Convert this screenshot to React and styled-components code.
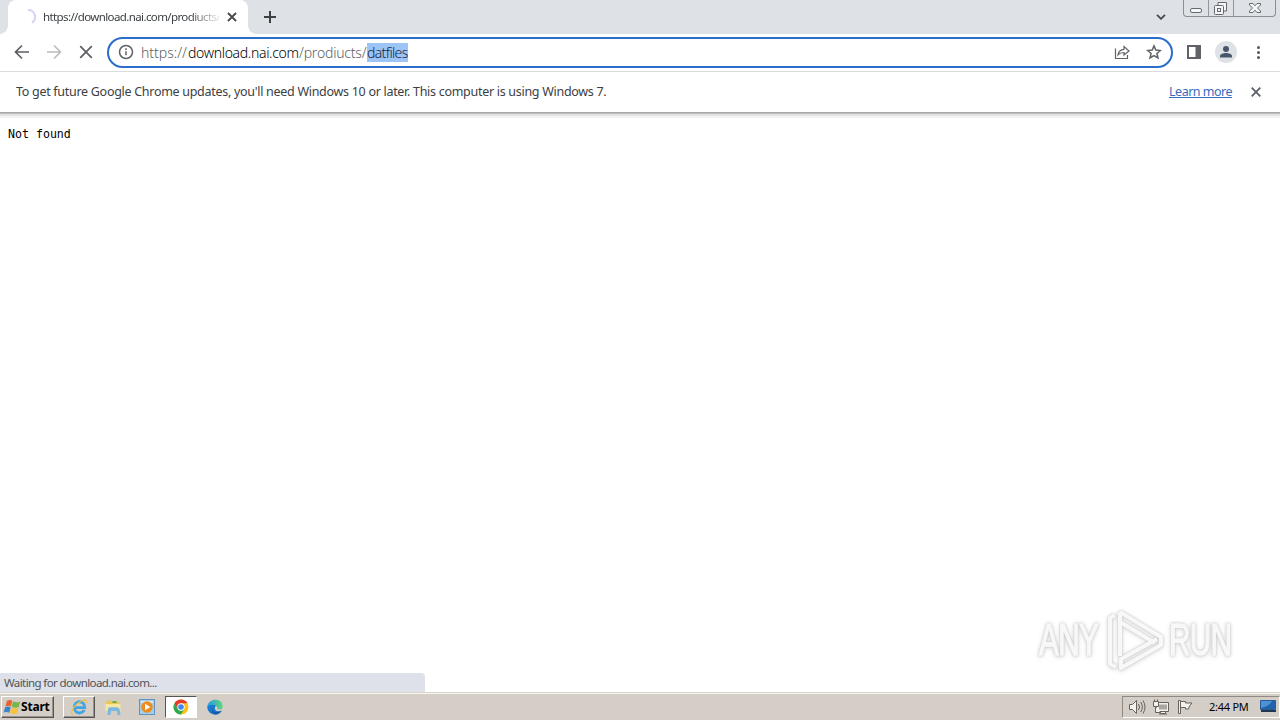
import React from 'react';
import styled, { createGlobalStyle } from 'styled-components';

const App = () => {
    return (
        <Screen>
            <GlobalStyle />
            <TabStrip>
                <Tab>
                    <Spinner viewBox="0 0 16 16"><path d="M8 1a7 7 0 0 1 4 12.8" /></Spinner>
                    <TabTitle>https://download.nai.com/prodiucts/</TabTitle>
                    <TabClose viewBox="0 0 10 10"><path d="M1 1l8 8M9 1l-8 8" /></TabClose>
                </Tab>
                <NewTab viewBox="0 0 12 12"><path d="M6 0v12M0 6h12" /></NewTab>
                <TabSearch viewBox="0 0 10 6"><path d="M1 .8l4 4 4-4" /></TabSearch>
                <Caption>
                    <CaptionButton $width={25}>
                        <svg width="25" height="16"><rect x="6.5" y="8.5" width="11" height="4" rx="1.5" /></svg>
                    </CaptionButton>
                    <CaptionButton $width={25}>
                        <svg width="25" height="16"><path d="M9 5V2.500h8.500v8.500H15" /><rect x="5.500" y="5.500" width="9" height="9" rx="1" /><rect x="8.500" y="8.500" width="3" height="3" /></svg>
                    </CaptionButton>
                    <CaptionButton $width={42}>
                        <svg width="42" height="16"><path d="M15.500 3.500h3.500l2 2.300 2-2.300h3.500v1.500l-3 3 3 3v1.500h-3.500l-2-2.300-2 2.300h-3.500v-1.500l3-3-3-3z" /></svg>
                    </CaptionButton>
                </Caption>
            </TabStrip>

            <Toolbar>
                <NavIcon viewBox="0 0 16 16"><path d="M15 8H2M8 1.500L1.500 8 8 14.500" /></NavIcon>
                <NavIcon viewBox="0 0 16 16" $disabled><path d="M1 8h13M8 1.500L14.500 8 8 14.500" /></NavIcon>
                <NavIcon viewBox="0 0 16 16"><path d="M2.200 2.200l11.600 11.600M13.800 2.200L2.200 13.800" /></NavIcon>
                <Omnibox>
                    <InfoIcon viewBox="0 0 16 16">
                        <circle cx="8" cy="8" r="6.500" /><path d="M8 7.200v4M8 4.300v1.600" />
                    </InfoIcon>
                    <Url>
                        <UrlPart $width={47}>https://</UrlPart>
                        <UrlPart $strong $width={111} $spacing="-0.32px">download.nai.com</UrlPart>
                        <UrlPart $width={68} $spacing="-0.2px">/prodiucts/</UrlPart>
                        <Selection $width={41} $spacing="-0.65px">datfiles</Selection>
                    </Url>
                    <LineIcon viewBox="0 0 16 16" $stroke={1.2}>
                        <path d="M1.500 4.500v10h12V11M4 10.800c.5-3.500 2.500-5.200 6-5.500V2.500L15 7l-5 4V8.500c-2.800 0-4.500.6-6 2.300z" />
                    </LineIcon>
                    <LineIcon viewBox="0 0 16 16" $stroke={1.5}>
                        <path d="M8 1.900l1.800 4.200 4.600.4-3.500 3 1.100 4.500L8 11.600 4 14l1.100-4.500-3.500-3 4.600-.4z" />
                    </LineIcon>
                </Omnibox>
                <PanelIcon viewBox="0 0 14 14"><rect x="1" y="1" width="12" height="12" /><path d="M8.500 0H14v14H8.500z" /></PanelIcon>
                <Avatar>
                    <svg width="14" height="14" viewBox="0 0 14 14"><circle cx="7" cy="4" r="3" /><path d="M1 12.500v-1.500c0-2 3.500-3 6-3s6 1 6 3v1.500z" /></svg>
                </Avatar>
                <Menu><i /><i /><i /></Menu>
            </Toolbar>

            <InfoBar>
                <Message>To get future Google Chrome updates, you'll need Windows 10 or later. This computer is using Windows 7.</Message>
                <LearnMore>Learn more</LearnMore>
                <InfoClose viewBox="0 0 10 10"><path d="M.7.7l8.600 8.600M9.300.7L.7 9.300" /></InfoClose>
            </InfoBar>

            <Page>
                <Pre>Not found</Pre>
                <Status>Waiting for download.nai.com...</Status>
                <Watermark>
                    <span>ANY</span>
                    <svg width="58" height="64" viewBox="0 0 58 64">
                        <path d="M8 7L3 10v46l6 3M13 4v44M13 4l41 25v8L14 60v-9l36-20M13 4v10l35 21" />
                    </svg>
                    <span>RUN</span>
                </Watermark>
            </Page>

            <TaskBar>
                <StartButton>
                    <svg width="18" height="16" viewBox="0 0 18 16">
                        <path fill="#e8642d" d="M4 1.800Q6.800.2 9.300 1.800L7.900 7.300Q5.300 6 2.400 7.300z" />
                        <path fill="#78b64a" d="M10 2.200Q13.500 4.200 17.300 2.400L15.700 8q-3.500 1.500-7.100-.3z" />
                        <path fill="#3d83cb" d="M2.200 8.100Q5.200 6.800 7.700 8.200L6.200 13.800Q3.500 12.200.6 13.600z" />
                        <path fill="#f4c23b" d="M8.400 8.500q3.500 1.700 7.100.3L13.900 14.300q-3.500 1.500-7-.2z" />
                    </svg>
                    Start
                </StartButton>
                <TaskButton $raised>
                    <svg width="18" height="18" viewBox="0 0 18 18" fill="none">
                        <path stroke="#3fa5e3" strokeWidth="2.800" d="M14.200 12A5.300 5.600 0 1 1 14.800 9.700H5" />
                        <path stroke="#edc04a" strokeWidth="1.300" d="M3.500 16C-.2 17.200 1.500 10.800 7 6s10.800-5.300 9.300-1.200" />
                    </svg>
                </TaskButton>
                <TaskButton>
                    <svg width="18" height="18" viewBox="0 0 18 18">
                        <path fill="#e9c75d" d="M2 3.500L6 2l1.500 1.500H15V13H2z" />
                        <path fill="#68b34e" d="M8.500 3h4v2h-4z" />
                        <path fill="#f8e7a0" d="M1.500 6h15v7h-15z" />
                        <path fill="#79b9df" d="M4 11q0-1.800 1.800-1.800h7.400q1.800 0 2.300 1.800l1 6h-3l-.5-4H7l-.5 4h-3z" />
                    </svg>
                </TaskButton>
                <TaskButton>
                    <svg width="18" height="18" viewBox="0 0 18 18">
                        <rect x="1.500" y="1.500" width="15" height="15" fill="#a5cce8" stroke="#5f94c1" />
                        <path fill="#d4e7f5" d="M3 3h12v2H3z" />
                        <circle cx="9" cy="9" r="5.700" fill="#ef8a1d" />
                        <path fill="#fff" d="M7 5.700L12.300 9 7 12.300z" />
                    </svg>
                </TaskButton>
                <TaskButton $active>
                    <svg width="16" height="16" viewBox="0 0 16 16">
                        <circle cx="8" cy="8" r="7.500" fill="#fbc116" />
                        <path fill="#e33b2e" d="M1.500 4.250A7.500 7.500 0 0 1 14.500 4.250H8L4.750 9.900z" />
                        <path fill="#2da94f" d="M1.500 4.250L4.750 9.900 8 11.750 11.250 9.900 7.900 15.500A7.500 7.500 0 0 1 1.500 4.250z" />
                        <circle cx="8" cy="8" r="3.700" fill="#fff" />
                        <circle cx="8" cy="8" r="2.800" fill="#4285f4" />
                    </svg>
                </TaskButton>
                <TaskButton>
                    <svg width="16" height="16" viewBox="0 0 16 16">
                        <defs>
                            <linearGradient id="edge" x1="0" x2="1"><stop stopColor="#229be5" /><stop offset="1" stopColor="#61d779" /></linearGradient>
                        </defs>
                        <path fill="#1a78cf" d="M.3 8C1 4 9 3 9.500 7c-2.500 0-2.500 5 2 5.300q2 .2 3.300-.8C12.500 16 8.500 16.200 6 15.300 2.500 14.200.3 11.500.3 8z" />
                        <path fill="url(#edge)" d="M.3 8C.5-.5 15.500-2.500 15.700 7.500c0 3-3.500 3.800-5.500 2.700C11.500 6.500 5 3.500.3 8z" />
                        <path fill="#145aa7" d="M5.800 8c-1.800 4 2.700 7 9 3.600-3 5.800-13 4.400-9-3.600z" />
                        <path fill="#d5cec7" d="M8.600 7.800q1-.9 1.500.2.400.9-.2 2.100 2.300 1.300 5.200-.1-.7 1.300-1.500 1.600-3.500.7-4.800-1Q8 9.300 8.600 7.800z" />
                    </svg>
                </TaskButton>
                <Tray>
                    <svg width="18" height="16" viewBox="0 0 18 16">
                        <path d="M1.500 5.500h3l4-4v13l-4-4h-3z" /><path d="M10.500 5q2 3 0 6M12.700 3q3.300 5 0 10M15 1.500q4 6.500 0 13" />
                    </svg>
                    <svg width="18" height="16" viewBox="0 0 18 16">
                        <path d="M4.500 3.500h12v9h-12zM8.500 12.500h5v2h-5z" />
                        <path d="M7 15h8" />
                        <path fill="#aaa69f" stroke="none" d="M7 5.500h8v5H7z" />
                        <path d="M1.500 2.500h5v5h-5zM2.500.5v2M5.500.5v2M3.500 7.500v6h5" />
                    </svg>
                    <svg width="18" height="16" viewBox="0 0 18 16">
                        <path d="M2.500 1.500h2v13h-2zM4.500 2.500h5v1.500h6.500l-2.500 3-1 3h-3V8.500h-5z" />
                    </svg>
                    <Clock>2:44 PM</Clock>
                    <Desktop viewBox="0 0 16 13"><path fill="#2363ad" stroke="#2b5c95" d="M.5.5h15v9H.5z" /><path fill="#4c91d4" stroke="none" d="M1 1h11Q10 6 1 8z" /><path fill="#233650" stroke="none" d="M1 10h15v2H1z" /></Desktop>
                </Tray>
            </TaskBar>
        </Screen>
    );
}

const GlobalStyle = createGlobalStyle`
  body {
   margin: 0;
   background: #fff;
  }

  * {
   box-sizing: border-box;
  }

  svg {
   display: block;
   flex-shrink: 0;
  }`;

const Screen = styled.div`
  display: flex;
  flex-direction: column;
  width: 1280px;
  height: 720px;
  overflow: hidden;
  font-family: "Noto Sans", "Open Sans", sans-serif;
  white-space: nowrap;`;

const TabStrip = styled.div`
  display: flex;
  align-items: flex-start;
  height: 34px;
  padding-left: 8px;
  background: #dee1e6;`;

const Tab = styled.div`
  position: relative;
  display: flex;
  align-items: center;
  width: 240px;
  height: 34px;
  padding: 0 11px 0 12px;
  background: #fff;
  border-radius: 8px 8px 0 0;

  &::before, &::after {
   content: "";
   position: absolute;
   bottom: 0;
   width: 8px;
   height: 8px;
  }

  &::before {
   left: -8px;
   background: radial-gradient(circle at 0 0, transparent 7.5px, #fff 8px);
  }

  &::after {
   right: -8px;
   background: radial-gradient(circle at 100% 0, transparent 7.5px, #fff 8px);
  }`;

const Spinner = styled.svg`
  width: 16px;
  height: 16px;
  margin-right: 7px;
  fill: none;
  stroke: #d3d3f8;
  stroke-width: 2;`;

const TabTitle = styled.div`
  width: 176px;
  color: #3c4043;
  font-size: 11.5px;
  line-height: 16px;
  letter-spacing: -0.61px;
  mask-image: linear-gradient(to right, #000 146px, transparent 180px);`;

const TabClose = styled.svg`
  width: 10px;
  height: 10px;
  margin-left: 8px;
  stroke: #45494d;
  stroke-width: 1.8;`;

const NewTab = styled.svg`
  width: 12px;
  height: 12px;
  margin: 11px 0 0 16px;
  stroke: #3c4043;
  stroke-width: 2;`;

const TabSearch = styled.svg`
  width: 10px;
  height: 6px;
  margin: 14px 17px 0 auto;
  fill: none;
  stroke: #45484c;
  stroke-width: 1.8;`;

const Caption = styled.div`
  display: flex;
  width: 93px;
  height: 17px;
  margin-right: 4px;
  border: 1px solid #8b8e93;
  border-top: 0;
  border-radius: 0 0 4px 4px;`;

const CaptionButton = styled.div`
  width: ${({ $width }) => $width}px;
  border-right: 1px solid #94979c;

  &:last-child {
   border-right: 0;
  }

  svg {
   fill: #f5f6f7;
   stroke: #66696e;
  }`;

const Toolbar = styled.div`
  display: flex;
  align-items: center;
  height: 38px;
  padding: 0 0 1px 14px;
  background: #fff;
  border-bottom: 1px solid #dadce0;`;

const NavIcon = styled.svg`
  width: 16px;
  height: 16px;
  margin-right: 16px;
  fill: none;
  stroke: ${({ $disabled }) => ($disabled ? '#babcbe' : '#5b5e62')};
  stroke-width: 1.7;

  &:nth-child(3) {
   margin-right: 13px;
  }`;

const Omnibox = styled.div`
  display: flex;
  align-items: center;
  width: 1066px;
  height: 31px;
  padding: 0 9px;
  border: 2px solid #2a6dcb;
  border-radius: 16px;`;

const InfoIcon = styled.svg`
  width: 16px;
  height: 16px;
  margin-right: 7px;
  fill: none;
  stroke: #5f6368;
  stroke-width: 1.5;`;

const Url = styled.div`
  display: flex;
  flex: 1;
  font-size: 14px;
  font-weight: 300;
  line-height: 19px;`;

const UrlPart = styled.span`
  width: ${({ $width }) => $width}px;
  color: ${({ $strong }) => ($strong ? '#000' : '#5c5f63')};
  letter-spacing: ${({ $spacing }) => $spacing};`;

const Selection = styled(UrlPart)`
  color: #14263d;
  background: #9dc4f7;`;

const LineIcon = styled.svg`
  width: 16px;
  height: 16px;
  margin-left: 16px;
  fill: none;
  stroke: #5f6368;
  stroke-width: ${({ $stroke }) => $stroke};`;

const PanelIcon = styled.svg`
  width: 14px;
  height: 14px;
  margin-left: 14px;
  fill: #5f6368;
  stroke: #5f6368;
  stroke-width: 2;

  rect {
   fill: none;
  }

  path {
   stroke: none;
  }`;

const Avatar = styled.div`
  display: flex;
  align-items: center;
  justify-content: center;
  width: 22px;
  height: 22px;
  margin-left: 14px;
  background: #dee1e6;
  border-radius: 50%;

  svg {
   fill: #48566d;
  }`;

const Menu = styled.div`
  display: flex;
  flex-direction: column;
  gap: 2px;
  margin-left: 20px;

  i {
   width: 3px;
   height: 3px;
   background: #55585c;
   border-radius: 50%;
  }`;

const InfoBar = styled.div`
  display: flex;
  align-items: center;
  height: 41px;
  padding: 0 19px 1px 16px;
  color: #3c4043;
  font-size: 12.5px;
  line-height: 18px;
  border-bottom: 1px solid #a7a7a7;`;

const Message = styled.div`
  flex: 1;
  letter-spacing: -0.29px;`;

const LearnMore = styled.a`
  color: #386bbd;
  letter-spacing: -0.5px;
  text-decoration: underline;`;

const InfoClose = styled.svg`
  width: 10px;
  height: 10px;
  margin-left: 19px;
  stroke: #5f6368;
  stroke-width: 1.9;`;

const Page = styled.main`
  position: relative;
  flex: 1;
  padding: 13px 8px;
  background: linear-gradient(#bdbdbd 1px, #e3e3e3 1px 3px, #f3f3f3 3px 5px, #fff 5px);`;

const Pre = styled.pre`
  margin: 0;
  color: #000;
  font-family: "DejaVu Sans Mono", monospace;
  font-size: 11.6px;
  line-height: 16px;`;

const Status = styled.div`
  position: absolute;
  bottom: 0;
  left: 0;
  width: 425px;
  height: 19px;
  padding-left: 4px;
  color: #505358;
  font-size: 11.5px;
  line-height: 19px;
  letter-spacing: -0.6px;
  background: #dee1e9;
  border-radius: 0 4px 0 0;`;

const Watermark = styled.div`
  position: absolute;
  right: 47px;
  bottom: 20px;
  display: flex;
  align-items: center;
  gap: 4px;
  filter: drop-shadow(0 0 1px #c4c4c4) drop-shadow(0 1px 2px #ddd);

  span {
   width: 64px;
   color: #f8f8f8;
   font: 45px/64px "Liberation Sans", sans-serif;
   letter-spacing: -1px;
   -webkit-text-stroke: 1.5px #f8f8f8;
   transform: scaleX(.66);
   transform-origin: left;
  }

  svg {
   fill: none;
   stroke: #f8f8f8;
   stroke-width: 4;
   stroke-linejoin: round;
  }`;

const TaskBar = styled.footer`
  display: flex;
  align-items: center;
  height: 28px;
  padding: 0 0 0 1px;
  background: #d5cec7;
  border-top: 1px solid #d8d5cc;
  box-shadow: inset 0 1px #f7f5ef;`;

const StartButton = styled.div`
  display: flex;
  align-items: center;
  width: 53px;
  height: 22px;
  margin-right: 9px;
  padding-left: 1px;
  color: #000;
  font-family: "Noto Sans", sans-serif;
  font-size: 12px;
  font-weight: 700;
  letter-spacing: -0.2px;
  border: 1px solid;
  border-color: #fff #555 #555 #fff;
  box-shadow: inset -1px -1px #98928c;`;

const TaskButton = styled.div`
  display: flex;
  align-items: center;
  justify-content: center;
  width: 32px;
  height: 22px;
  margin-right: 2px;
  background: ${({ $active }) => ($active ? '#fff' : 'transparent')};
  border: 1px solid transparent;
  border-color: ${({ $active, $raised }) => ($active ? '#555 #fff #fff #555' : $raised ? '#fff #555 #555 #fff' : 'transparent')};
  box-shadow: ${({ $raised }) => ($raised ? 'inset -1px -1px #98928c' : 'none')};`;

const Tray = styled.div`
  display: flex;
  align-items: center;
  width: 158px;
  height: 22px;
  margin-left: auto;
  padding-left: 5px;
  border: 1px solid;
  border-color: #8f8a84 #fff #fff #8f8a84;

  svg {
   margin-right: 6px;
   fill: #f3f1ed;
   stroke: #66625d;
  }

  svg path:nth-child(2) {
   fill: none;
  }`;

const Clock = styled.div`
  width: 41px;
  margin: 0 11px 0 9px;
  color: #000;
  font-size: 11px;
  letter-spacing: -0.25px;`;

const Desktop = styled.svg`
  width: 16px;
  height: 13px;

  && path:nth-child(2) {
   fill: #4c91d4;
  }`;

export default App;
